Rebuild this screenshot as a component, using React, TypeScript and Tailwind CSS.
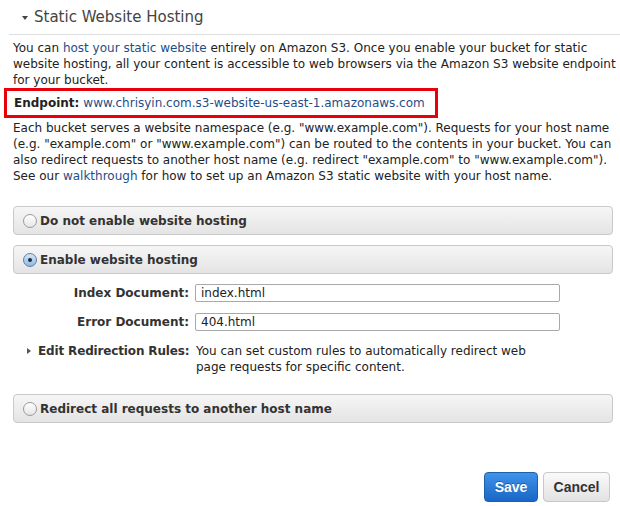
import React from "react";

function Radio({ checked }: { checked?: boolean }) {
  return (
    <span
      className={
        "inline-flex items-center justify-center w-[14px] h-[14px] rounded-full border shrink-0 " +
        (checked
          ? "border-[#5b7fa8] bg-gradient-to-b from-[#d4e6f8] to-[#8fb8e4]"
          : "border-[#9a9a9a] bg-gradient-to-b from-[#ffffff] to-[#e6e6e6]")
      }
    >
      {checked && <span className="w-[4px] h-[4px] rounded-full bg-[#1d2b3a]" />}
    </span>
  );
}

function OptionBar({ label, checked }: { label: string; checked?: boolean }) {
  return (
    <div className="h-[29px] rounded-[4px] border border-[#c9c9c9] bg-gradient-to-b from-[#f6f6f6] to-[#e4e4e4] flex items-center gap-[3px] pl-[9px]">
      <Radio checked={checked} />
      <span className="font-bold text-[12px] text-[#333]">{label}</span>
    </div>
  );
}

export default function App() {
  return (
    <div className="w-[620px] h-[506px] bg-white text-[12px] leading-[16px] text-[#222] font-['DejaVu_Sans',Verdana,sans-serif]">
      <div className="h-[35px] ml-[9px] pl-[13px] flex items-center border-b border-[#dedede]">
        <span className="w-0 h-0 border-l-[3px] border-r-[3px] border-t-[4px] border-l-transparent border-r-transparent border-t-[#444] mr-[6px] mt-[1px]" />
        <span className="text-[15px] text-[#444]">Static Website Hosting</span>
      </div>

      <p className="pl-[13px] pr-[2px] pt-[5px]">
        You can <a className="text-[#1f4d87]">host your static website</a> entirely on Amazon S3. Once you enable your bucket for static website hosting, all your content is accessible to web browsers via the Amazon S3 website endpoint for your bucket.
      </p>

      <div className="ml-[4px] w-[434px] h-[30px] border-[3px] border-[#e8000b] flex items-center pl-[7px] whitespace-nowrap">
        <span className="font-bold">Endpoint:</span>
        <a className="ml-[4px] text-[#1f4d87]">www.chrisyin.com.s3-website-us-east-1.amazonaws.com</a>
      </div>

      <p className="pl-[13px] pr-[6px] mt-[2px]">
        Each bucket serves a website namespace (e.g. "www.example.com"). Requests for your host name (e.g. "example.com" or "www.example.com") can be routed to the contents in your bucket. You can also redirect requests to another host name (e.g. redirect "example.com" to "www.example.com"). See our <a className="text-[#1f4d87]">walkthrough</a> for how to set up an Amazon S3 static website with your host name.
      </p>

      <div className="pl-[13px] pr-[7px] mt-[22px] flex flex-col gap-[10px]">
        <OptionBar label="Do not enable website hosting" />
        <OptionBar label="Enable website hosting" checked />
      </div>

      <div className="mt-[10px] flex flex-col gap-[11px]">
        <div className="flex items-center">
          <label className="w-[189px] text-right font-bold text-[12px] text-[#333]">Index Document:</label>
          <div className="ml-[6px] w-[365px] h-[18px] border border-[#a9a9a9] rounded-[2px] flex items-center px-[5px] text-[12px] text-[#222]">index.html</div>
        </div>
        <div className="flex items-center">
          <label className="w-[189px] text-right font-bold text-[12px] text-[#333]">Error Document:</label>
          <div className="ml-[6px] w-[365px] h-[18px] border border-[#a9a9a9] rounded-[2px] flex items-center px-[5px] text-[12px] text-[#222]">404.html</div>
        </div>
      </div>

      <div className="mt-[12px] flex">
        <div className="w-[189px] flex items-start pl-[27px] h-[16px]">
          <span className="mt-[5px] w-0 h-0 border-t-[3px] border-b-[3px] border-l-[4px] border-t-transparent border-b-transparent border-l-[#555] mr-[7px]" />
          <span className="font-bold text-[12px] tracking-[-0.15px] text-[#333] whitespace-nowrap">Edit Redirection Rules:</span>
        </div>
        <p className="ml-[7px] w-[345px]">
          You can set custom rules to automatically redirect web page requests for specific content.
        </p>
      </div>

      <div className="pl-[13px] pr-[7px] mt-[19px]">
        <OptionBar label="Redirect all requests to another host name" />
      </div>

      <div className="mt-[49px] flex justify-end gap-[5px] pr-[10px] font-['Liberation_Sans',Arial,sans-serif]">
        <button className="w-[54px] h-[30px] rounded-[4px] border border-[#1f5fa8] bg-gradient-to-b from-[#3f93ea] to-[#1a66c6] text-white font-bold text-[14px] [text-shadow:0_-1px_0_rgba(0,0,0,0.3)]">
          Save
        </button>
        <button className="w-[67px] h-[30px] rounded-[4px] border border-[#c8c8c8] bg-gradient-to-b from-[#fafafa] to-[#e2e2e2] text-[#333] font-bold text-[14px]">
          Cancel
        </button>
      </div>
    </div>
  );
}
